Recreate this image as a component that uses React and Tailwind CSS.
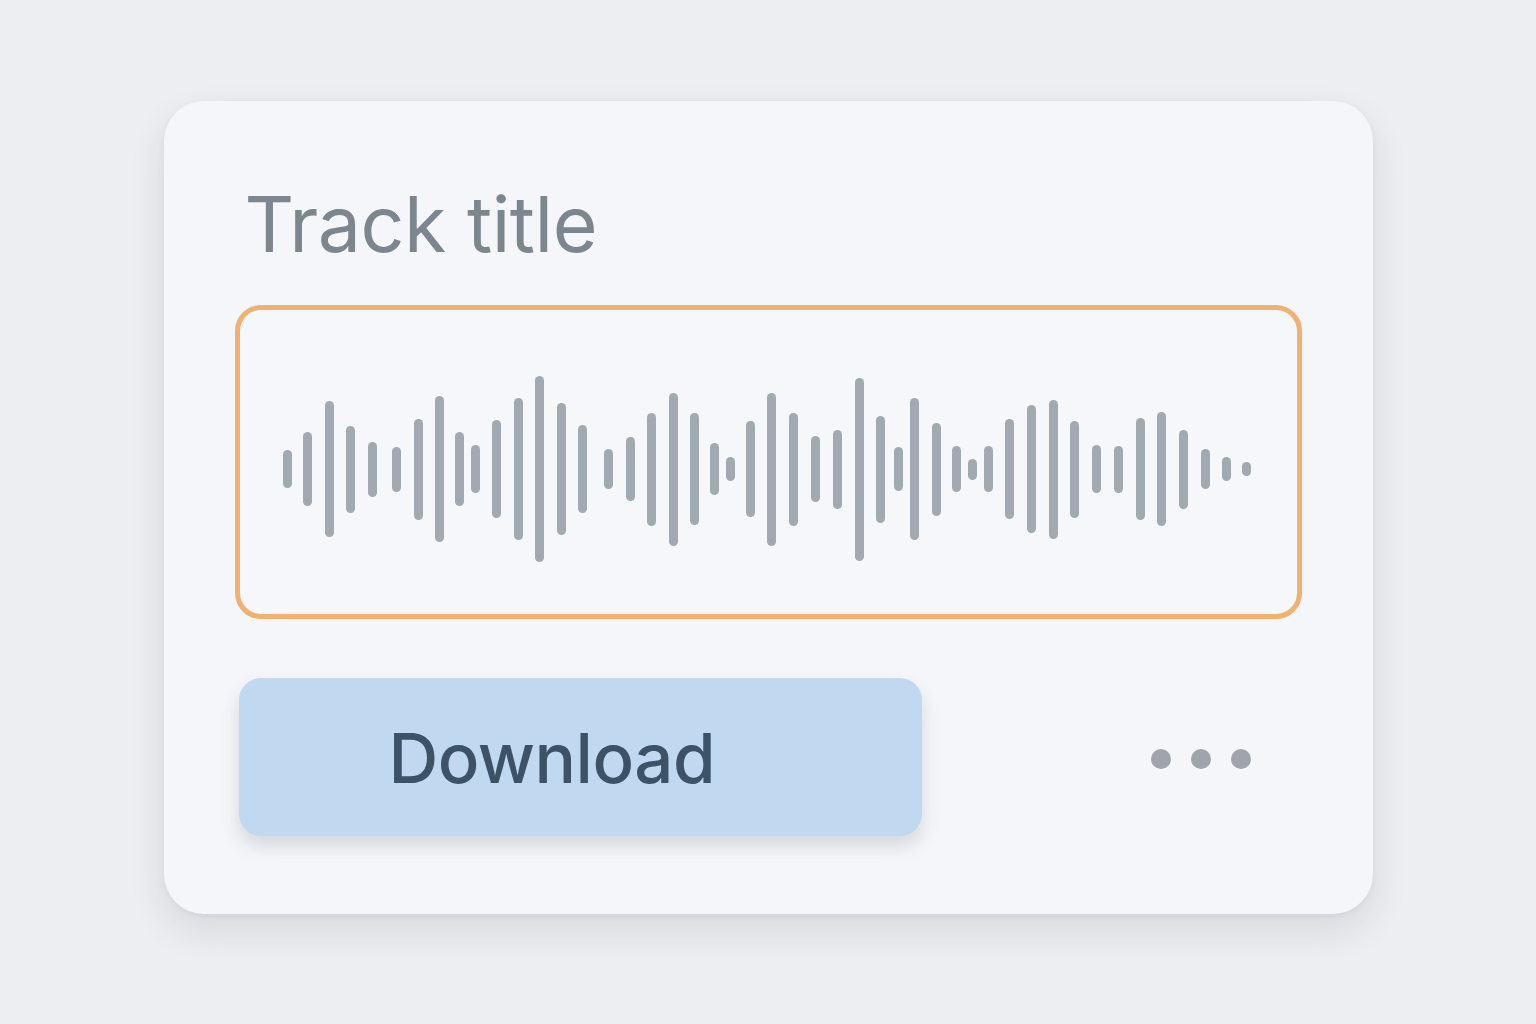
import React from "react";

// bar centre x (page px) and height, left to right
const bars = [
  [286.8, 38], [307.5, 74], [328.8, 136], [350.2, 87], [372.2, 55], [395.6, 45],
  [418, 101], [438.7, 146], [458.7, 74], [475.2, 48], [495.8, 98], [517.9, 142],
  [538.9, 186], [560.6, 132], [581.6, 88], [607.8, 40], [629.8, 64], [651.5, 113],
  [672.8, 153], [694.2, 112], [714.2, 52], [730.3, 24], [750, 96], [771.6, 153],
  [793.3, 113], [815, 66], [836.8, 79], [858.9, 183], [880.3, 107], [898.5, 44],
  [914.3, 142], [936, 93], [956, 46], [972.2, 21], [988.7, 46], [1009.7, 100],
  [1031.1, 128], [1052.9, 139], [1074.6, 97], [1096, 48], [1117.8, 47], [1139.9, 102],
  [1161.6, 114], [1183, 79], [1204.8, 40], [1225.8, 24], [1246.1, 14],
];

export default function App() {
  return (
    <div
      className="min-h-screen w-full bg-[#eceef1] pt-[101px]"
      style={{ fontFamily: "Inter, 'Noto Sans', sans-serif" }}
    >
      <div className="mx-auto w-[1209px] h-[813px] rounded-[40px] bg-[#f5f6f9] shadow-[0_16px_36px_rgba(40,48,60,0.11),0_2px_6px_rgba(40,48,60,0.05)] px-[71px] pt-[85px]">
        <h1 className="pl-[10px] text-[77px] leading-none font-normal text-[#7c868f] tracking-[-0.5px]">
          Track title
        </h1>

        <div className="mt-[42px] h-[314px] rounded-[26px] border-[5px] border-[#f0b272] bg-[#f6f7fa] flex items-center pt-[14px]">
          <div className="flex items-center">
            {bars.map(([x, h], i) => (
              <div
                key={i}
                className="w-[9px] shrink-0 rounded-full bg-[#a2aab1]"
                style={{
                  height: h,
                  marginLeft: i === 0 ? x - 4.5 - 239 : x - bars[i - 1][0] - 9,
                }}
              />
            ))}
          </div>
        </div>

        <div className="mt-[59px] flex items-center justify-between">
          <button className="w-[683px] h-[158px] ml-[4px] rounded-[22px] bg-[#c0d9f0] text-left pl-[150px] pt-[4px] text-[69px] font-medium text-[#3d5266] tracking-[-0.5px] shadow-[0_10px_18px_rgba(40,60,80,0.16)]">
            Download
          </button>
          <div className="flex items-center gap-[20px] mr-[51px] mt-[3px]">
            <span className="w-[20px] h-[20px] rounded-full bg-[#9ea5ac]" />
            <span className="w-[20px] h-[20px] rounded-full bg-[#9ea5ac]" />
            <span className="w-[20px] h-[20px] rounded-full bg-[#9ea5ac]" />
          </div>
        </div>
      </div>
    </div>
  );
}
